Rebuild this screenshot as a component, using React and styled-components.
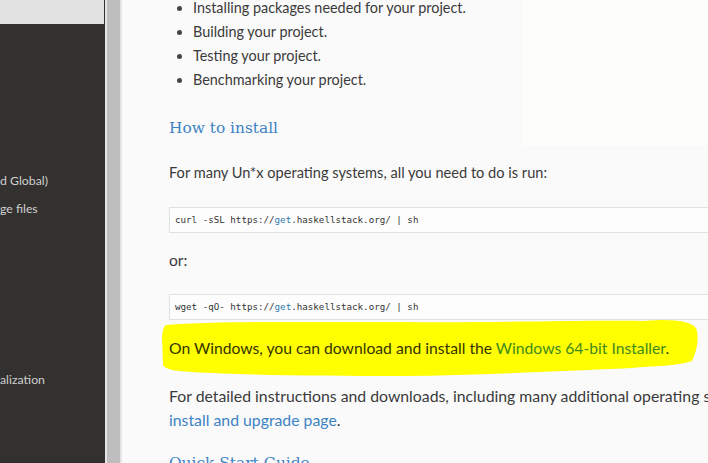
import React from "react";
import styled, { createGlobalStyle } from "styled-components";

const Global = createGlobalStyle`
  html, body { margin: 0; padding: 0; }
  body { width: 708px; height: 463px; overflow: hidden; background: #fafafa; }
`;

const Page = styled.div`
  display: flex;
  width: 708px;
  height: 463px;
  overflow: hidden;
  font-family: Lato, "Noto Sans", sans-serif;
  position: relative;
`;

const Sidebar = styled.nav`
  width: 105px;
  flex: none;
  display: flex;
  flex-direction: column;
  background: #333130;
`;

const SideTop = styled.div`
  height: 24px;
  background: #e2e2e2;
  margin-right: 1px;
`;

const SideItem = styled.div`
  color: #cfcfcf;
  font-size: 12.3px;
  line-height: 16px;
  white-space: nowrap;
  margin-top: ${(p) => p.$mt}px;
`;

const Gutter = styled.div`
  flex: none;
  width: 17px;
  display: flex;
  background: #e4e4e4;
  padding: 0 2px;
  box-sizing: border-box;
`;

const Track = styled.div`
  flex: 1;
  background: #bebebe;
`;

const Main = styled.main`
  flex: 1;
  position: relative;
  background: #fafafa;
  padding-left: 47px;
  color: #3a3a3a;
  font-size: 14.5px;
  min-width: 0;
`;

const Sheen = styled.div`
  position: absolute;
  left: 400px;
  top: 0;
  width: 200px;
  height: 146px;
  background: #fdfdfb;
`;

const Content = styled.div`
  position: relative;
  margin-top: -4px;
`;

const List = styled.ul`
  margin: 0;
  padding-left: 24px;
  list-style: disc;
`;

const Item = styled.li`
  line-height: 24px;
  font-size: 14.4px;
  white-space: nowrap;
  &::marker { font-size: 14px; color: #444; }
`;

const Heading = styled.h2`
  margin: ${(p) => p.$mt}px 0 0;
  font-family: "DejaVu Serif", "Liberation Serif", serif;
  font-weight: normal;
  font-size: 15.4px;
  line-height: 22px;
  color: #3d82c4;
  white-space: nowrap;
`;

const Para = styled.p`
  margin: ${(p) => p.$mt}px 0 0;
  font-size: ${(p) => p.$size || 14.6}px;
  line-height: 24px;
  white-space: nowrap;
  position: relative;
`;

const Link = styled.a`
  color: #3d82c4;
  text-decoration: none;
`;

const Code = styled.pre`
  margin: ${(p) => p.$mt}px 0 0;
  height: 26px;
  box-sizing: border-box;
  border: 1px solid #e1e1e1;
  border-right: none;
  background: #fdfdfd;
  padding: 0 0 0 5px;
  font-family: "DejaVu Sans Mono", "Liberation Mono", monospace;
  font-size: 9.2px;
  line-height: 24px;
  color: #333;
`;

const Host = styled.span`
  color: #2a79ad;
`;

const Marked = styled.span`
  position: relative;
  z-index: 1;
  color: #353300;
`;

const MarkedLink = styled.span`
  color: #3f8a1f;
`;

const Marker = styled.svg`
  position: absolute;
  left: -7px;
  top: -17px;
  z-index: 0;
`;

function Highlight() {
  return (
    <Marker width="545" height="60" viewBox="0 0 545 60">
      <path
        d="M4 6 C60 2 140 3 240 3 C330 4 420 1 480 2 L498 1 C520 1 534 4 535 12 C537 22 534 34 530 42 C515 47 490 47 470 49 C400 52 320 56 240 57 C160 57 80 56 30 53 C12 52 3 50 1 46 L0 18 C1 10 2 7 4 6 Z"
        fill="#ffff00"
      />
    </Marker>
  );
}

export default function App() {
  return (
    <>
      <Global />
      <Page>
        <Sidebar>
          <SideTop />
          <SideItem $mt={149}>d Global)</SideItem>
          <SideItem $mt={12}>ge files</SideItem>
          <SideItem $mt={155}>alization</SideItem>
        </Sidebar>
        <Gutter>
          <Track />
        </Gutter>
        <Main>
          <Sheen />
          <Content>
            <List>
              <Item>Installing packages needed for your project.</Item>
              <Item>Building your project.</Item>
              <Item>Testing your project.</Item>
              <Item>Benchmarking your project.</Item>
            </List>
            <Heading $mt={25}>How to install</Heading>
            <Para $mt={22}>For many Un*x operating systems, all you need to do is run:</Para>
            <Code $mt={22}>
              curl -sSL https://<Host>get</Host>.haskellstack.org/ | sh
            </Code>
            <Para $mt={15} $size={15.6}>or:</Para>
            <Code $mt={22}>
              wget -qO- https://<Host>get</Host>.haskellstack.org/ | sh
            </Code>
            <Para $mt={16} $size={15.7}>
              <Highlight />
              <Marked>
                On Windows, you can download and install the <MarkedLink>Windows 64-bit Installer</MarkedLink>.
              </Marked>
            </Para>
            <Para $mt={24} $size={15.8}>
              For detailed instructions and downloads, including many additional operating systems, check out the
              <br />
              <Link>install and upgrade page</Link>.
            </Para>
            <Heading $mt={20}>Quick Start Guide</Heading>
          </Content>
        </Main>
      </Page>
    </>
  );
}
